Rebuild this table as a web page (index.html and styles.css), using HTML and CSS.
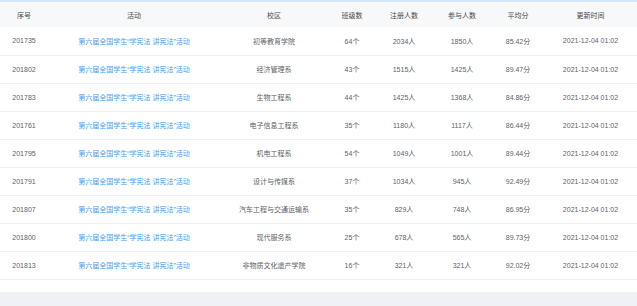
FILE: index.html
```html
<!DOCTYPE html>
<html lang="zh-CN">
<head>
    <meta charset="UTF-8">
    <title>活动统计</title>
    <link rel="stylesheet" href="styles.css">
</head>
<body>
    <div class="panel">
        <table class="data-table">
            <colgroup>
                <col class="c-id">
                <col class="c-act">
                <col class="c-school">
                <col class="c-class">
                <col class="c-reg">
                <col class="c-join">
                <col class="c-avg">
                <col class="c-time">
            </colgroup>
            <thead>
                <tr>
                    <th>序号</th>
                    <th>活动</th>
                    <th>校区</th>
                    <th>班级数</th>
                    <th>注册人数</th>
                    <th>参与人数</th>
                    <th>平均分</th>
                    <th>更新时间</th>
                </tr>
            </thead>
            <tbody id="rows"></tbody>
        </table>
        <div class="footer-bar"></div>
    </div>

    <script>
        const data = [
            ['201735', '初等教育学院', 64, 2034, 1850, '85.42'],
            ['201802', '经济管理系', 43, 1515, 1425, '89.47'],
            ['201783', '生物工程系', 44, 1425, 1368, '84.86'],
            ['201761', '电子信息工程系', 35, 1180, 1117, '86.44'],
            ['201795', '机电工程系', 54, 1049, 1001, '89.44'],
            ['201791', '设计与传媒系', 37, 1034, 945, '92.49'],
            ['201807', '汽车工程与交通运输系', 35, 829, 748, '86.95'],
            ['201800', '现代服务系', 25, 678, 565, '89.73'],
            ['201813', '非物质文化遗产学院', 16, 321, 321, '92.02']
        ];
        const tbody = document.getElementById('rows');

        data.forEach(function(r) {
            const tr = document.createElement('tr');
            tr.innerHTML =
                '<td>' + r[0] + '</td>' +
                '<td><a href="#" class="act-link">第六届全国学生“学宪法 讲宪法”活动</a></td>' +
                '<td>' + r[1] + '</td>' +
                '<td>' + r[2] + '个</td>' +
                '<td>' + r[3] + '人</td>' +
                '<td>' + r[4] + '人</td>' +
                '<td>' + r[5] + '分</td>' +
                '<td>2021-12-04 01:02</td>';
            tbody.appendChild(tr);
        });
    </script>
</body>
</html>
```

FILE: styles.css
```css
* {
    box-sizing: border-box;
    margin: 0;
    padding: 0;
}

body {
    background-color: #fff;
    font-family: 'Liberation Sans', 'Noto Sans CJK SC', sans-serif;
    font-size: 7px;
    color: #606266;
}

.panel {
    width: 637px;
    border-top: 2px solid #cfe6fb;
}

.data-table {
    width: 637px;
    border-collapse: collapse;
    table-layout: fixed;
}

.c-id { width: 48px; }
.c-act { width: 172px; }
.c-school { width: 108px; }
.c-class { width: 48px; }
.c-reg { width: 56px; }
.c-join { width: 60px; }
.c-avg { width: 52px; }
.c-time { width: 93px; }

.data-table th {
    height: 25px;
    background-color: #f7f8fa;
    font-weight: normal;
    color: #4a4a4a;
    text-align: center;
    white-space: nowrap;
}

.data-table td {
    height: 28px;
    border-bottom: 1px solid #eef0f4;
    text-align: center;
    white-space: nowrap;
}

.act-link {
    color: #409eff;
    text-decoration: none;
}

.footer-bar {
    margin-top: 12px;
    height: 14px;
    background-color: #f0f1f5;
}
```
